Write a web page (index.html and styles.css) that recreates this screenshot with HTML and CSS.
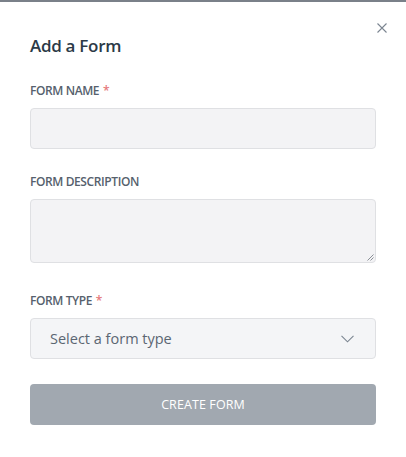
FILE: index.html
```html
<!DOCTYPE html>
<html>
<head>
<meta charset="utf-8">
<link rel="stylesheet" href="styles.css">
</head>
<body>
<div class="modal">
  <button class="close" aria-label="Close">
    <svg width="10" height="10" viewBox="0 0 10 10"><path d="M0.5 0.5L9.5 9.5M9.5 0.5L0.5 9.5" stroke="#7b8591" stroke-width="1.1" fill="none"/></svg>
  </button>
  <h1 class="title">Add a Form</h1>
  <div class="field">
    <label class="label">FORM NAME <span class="req">*</span></label>
    <div class="input"></div>
  </div>
  <div class="field field-desc">
    <label class="label">FORM DESCRIPTION</label>
    <div class="input textarea">
      <svg class="grip" width="8" height="8" viewBox="0 0 8 8"><path d="M7.5 1.5L1.5 7.5M7.5 4.5L4.5 7.5" stroke="#8a8f96" stroke-width="1" fill="none"/></svg>
    </div>
  </div>
  <div class="field">
    <label class="label">FORM TYPE <span class="req">*</span></label>
    <div class="input select">
      <span class="placeholder">Select a form type</span>
      <svg class="chev" width="13" height="8" viewBox="0 0 13 8"><path d="M0.5 0.8L6.5 6.8L12.5 0.8" stroke="#7b8591" stroke-width="1.1" fill="none"/></svg>
    </div>
  </div>
  <button class="submit">CREATE FORM</button>
</div>
</body>
</html>
```
FILE: styles.css
```css
html, body {
  margin: 0;
  padding: 0;
  background: #ffffff;
}
body {
  border-top: 2px solid #7a8089;
  font-family: "Open Sans", "Noto Sans", sans-serif;
  width: 406px;
  height: 455px;
  overflow: hidden;
}
.modal {
  position: relative;
  padding: 32px 30px 0 30px;
  display: flex;
  flex-direction: column;
}
.close {
  position: absolute;
  top: 21px;
  left: 377px;
  width: 10px;
  height: 10px;
  padding: 0;
  border: 0;
  background: none;
  display: flex;
}
.title {
  margin: 0;
  font-size: 17px;
  font-weight: 600;
  line-height: 24px;
  letter-spacing: -0.3px;
  color: #2c3a47;
}
.field {
  display: flex;
  flex-direction: column;
  margin-top: 25px;
}
.label {
  font-size: 12px;
  font-weight: 600;
  line-height: 16px;
  color: #56616d;
  letter-spacing: -0.4px;
  margin-bottom: 9px;
}
.req {
  color: #e5797b;
  margin-left: 1px;
}
.input {
  height: 39px;
  background: #f3f3f5;
  border: 1px solid #dfe0e3;
  border-radius: 4px;
}
.textarea {
  height: 62px;
  position: relative;
}
.grip {
  position: absolute;
  right: 1px;
  bottom: 1px;
}
.field-desc + .field {
  margin-top: 30px;
}
.select {
  display: flex;
  align-items: center;
  justify-content: space-between;
  padding: 0 21px 0 19px;
  background: #f4f5f7;
}
.placeholder {
  font-size: 14.5px;
  color: #5b6672;
  line-height: 22px;
}
.chev {
  margin-top: 1px;
}
.submit {
  margin-top: 25px;
  height: 41px;
  border: 0;
  border-radius: 4px;
  background: #a1a8b0;
  color: #ffffff;
  font-family: "Open Sans", "Noto Sans", sans-serif;
  font-size: 12.5px;
  font-weight: 400;
  letter-spacing: 0.1px;
  padding: 0;
}
```
